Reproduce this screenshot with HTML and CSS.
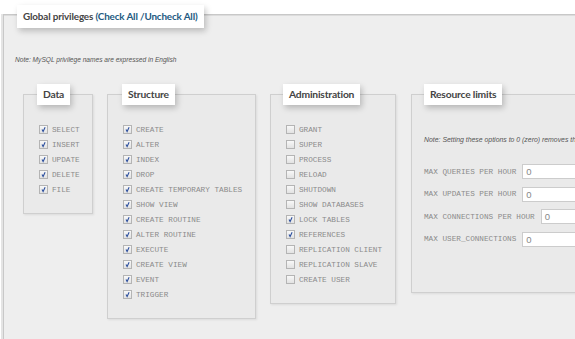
FILE: index.html
```html
<!DOCTYPE html>
<html lang="en">
<head>
    <meta charset="UTF-8">
    <title>Global privileges</title>
    <link rel="stylesheet" href="styles.css">
</head>
<body>
    <div class="outer">
        <div class="legend">Global privileges <a href="#">(Check All /Uncheck All)</a></div>
        <p class="note">Note: MySQL privilege names are expressed in English</p>

        <div class="groups">
            <div class="group group-data">
                <div class="legend">Data</div>
                <ul class="privs">
                    <li><span class="cb on"><svg viewBox="0 0 9 9"><path d="M2.6 4.6 L4 7.2 L6.6 1.6"/></svg></span>SELECT</li>
                    <li><span class="cb on"><svg viewBox="0 0 9 9"><path d="M2.6 4.6 L4 7.2 L6.6 1.6"/></svg></span>INSERT</li>
                    <li><span class="cb on"><svg viewBox="0 0 9 9"><path d="M2.6 4.6 L4 7.2 L6.6 1.6"/></svg></span>UPDATE</li>
                    <li><span class="cb on"><svg viewBox="0 0 9 9"><path d="M2.6 4.6 L4 7.2 L6.6 1.6"/></svg></span>DELETE</li>
                    <li><span class="cb on"><svg viewBox="0 0 9 9"><path d="M2.6 4.6 L4 7.2 L6.6 1.6"/></svg></span>FILE</li>
                </ul>
            </div>

            <div class="group group-structure">
                <div class="legend">Structure</div>
                <ul class="privs">
                    <li><span class="cb on"><svg viewBox="0 0 9 9"><path d="M2.6 4.6 L4 7.2 L6.6 1.6"/></svg></span>CREATE</li>
                    <li><span class="cb on"><svg viewBox="0 0 9 9"><path d="M2.6 4.6 L4 7.2 L6.6 1.6"/></svg></span>ALTER</li>
                    <li><span class="cb on"><svg viewBox="0 0 9 9"><path d="M2.6 4.6 L4 7.2 L6.6 1.6"/></svg></span>INDEX</li>
                    <li><span class="cb on"><svg viewBox="0 0 9 9"><path d="M2.6 4.6 L4 7.2 L6.6 1.6"/></svg></span>DROP</li>
                    <li><span class="cb on"><svg viewBox="0 0 9 9"><path d="M2.6 4.6 L4 7.2 L6.6 1.6"/></svg></span>CREATE TEMPORARY TABLES</li>
                    <li><span class="cb on"><svg viewBox="0 0 9 9"><path d="M2.6 4.6 L4 7.2 L6.6 1.6"/></svg></span>SHOW VIEW</li>
                    <li><span class="cb on"><svg viewBox="0 0 9 9"><path d="M2.6 4.6 L4 7.2 L6.6 1.6"/></svg></span>CREATE ROUTINE</li>
                    <li><span class="cb on"><svg viewBox="0 0 9 9"><path d="M2.6 4.6 L4 7.2 L6.6 1.6"/></svg></span>ALTER ROUTINE</li>
                    <li><span class="cb on"><svg viewBox="0 0 9 9"><path d="M2.6 4.6 L4 7.2 L6.6 1.6"/></svg></span>EXECUTE</li>
                    <li><span class="cb on"><svg viewBox="0 0 9 9"><path d="M2.6 4.6 L4 7.2 L6.6 1.6"/></svg></span>CREATE VIEW</li>
                    <li><span class="cb on"><svg viewBox="0 0 9 9"><path d="M2.6 4.6 L4 7.2 L6.6 1.6"/></svg></span>EVENT</li>
                    <li><span class="cb on"><svg viewBox="0 0 9 9"><path d="M2.6 4.6 L4 7.2 L6.6 1.6"/></svg></span>TRIGGER</li>
                </ul>
            </div>

            <div class="group group-admin">
                <div class="legend">Administration</div>
                <ul class="privs">
                    <li><span class="cb"></span>GRANT</li>
                    <li><span class="cb"></span>SUPER</li>
                    <li><span class="cb"></span>PROCESS</li>
                    <li><span class="cb"></span>RELOAD</li>
                    <li><span class="cb"></span>SHUTDOWN</li>
                    <li><span class="cb"></span>SHOW DATABASES</li>
                    <li><span class="cb on"><svg viewBox="0 0 9 9"><path d="M2.6 4.6 L4 7.2 L6.6 1.6"/></svg></span>LOCK TABLES</li>
                    <li><span class="cb on"><svg viewBox="0 0 9 9"><path d="M2.6 4.6 L4 7.2 L6.6 1.6"/></svg></span>REFERENCES</li>
                    <li><span class="cb"></span>REPLICATION CLIENT</li>
                    <li><span class="cb"></span>REPLICATION SLAVE</li>
                    <li><span class="cb"></span>CREATE USER</li>
                </ul>
            </div>

            <div class="group group-limits">
                <div class="legend">Resource limits</div>
                <p class="note">Note: Setting these options to 0 (zero) removes the limit.</p>
                <div class="limits">
                    <label>MAX QUERIES PER HOUR <span class="field">0</span></label>
                    <label>MAX UPDATES PER HOUR <span class="field">0</span></label>
                    <label>MAX CONNECTIONS PER HOUR <span class="field">0</span></label>
                    <label>MAX USER_CONNECTIONS <span class="field">0</span></label>
                </div>
            </div>
        </div>
    </div>
</body>
</html>
```

FILE: styles.css
```css
body {
    margin: 0;
    background: #fff;
    font-family: Lato, "Liberation Sans", sans-serif;
    overflow: hidden;
}
.outer {
    margin: 14px 0 0 3px;
    border-top: 1px solid #c8c8c8;
    border-left: 1px solid #c8c8c8;
    box-shadow: -2px 0 0 #e4e4e4, inset 0 1px 0 #dcdcdc;
    background: #eee;
    height: 330px;
    width: 800px;
}
.legend {
    display: block;
    width: fit-content;
    background: #fff;
    color: #444;
    font-weight: bold;
    box-shadow: 2px 3px 6px rgba(0, 0, 0, 0.22);
    white-space: nowrap;
}
.outer > .legend {
    margin: -10px 0 0 13px;
    height: 23px;
    line-height: 23px;
    padding: 0 6px;
    font-size: 9.9px;
    letter-spacing: -0.15px;
}
.legend a {
    color: #235a81;
    text-decoration: none;
}
.note {
    font-family: "Liberation Sans", Arial, sans-serif;
    font-style: italic;
    font-size: 6.6px;
    color: #555;
    margin: 0;
    line-height: 10px;
    white-space: nowrap;
}
.outer > .note {
    margin: 27px 0 0 11px;
}
.groups {
    display: flex;
    align-items: flex-start;
    gap: 14px;
    margin: 29px 0 0 19px;
}
.group {
    flex-shrink: 0;
    background: #eaeaea;
    border: 1px solid #cfcfcf;
    box-shadow: 1px 1px 2px rgba(0, 0, 0, 0.08);
}
.group > .legend {
    margin-top: -11px;
    height: 21px;
    line-height: 21px;
    padding: 0 6px;
    font-size: 10.3px;
    letter-spacing: -0.2px;
}
.group-data { width: 68px; }
.group-data > .legend { margin-left: 13px; }
.group-structure { width: 147px; }
.group-structure > .legend { margin-left: 14px; }
.group-admin { width: 124px; }
.group-admin > .legend { margin-left: 12px; }
.group-limits { width: 300px; margin-left: 1px; }
.group-limits > .legend { margin-left: 12px; }
.privs {
    list-style: none;
    margin: 0;
    padding: 17px 0 16px 15px;
}
.privs li {
    display: flex;
    align-items: center;
    height: 15px;
    font-family: "Liberation Mono", "Courier New", monospace;
    font-size: 7.7px;
    color: #8a8a8a;
    white-space: nowrap;
}
.cb {
    width: 9px;
    height: 9px;
    box-sizing: border-box;
    border: 1px solid #b4b4b4;
    background: linear-gradient(#f8f8f8, #e2e2e2);
    margin-right: 4px;
    flex-shrink: 0;
}
.cb svg {
    display: block;
    width: 7px;
    height: 7px;
}
.cb path {
    fill: none;
    stroke: #2c4f9e;
    stroke-width: 1.4;
}
.group-limits .note {
    margin: 30px 0 0 12px;
    font-size: 6.9px;
}
.limits {
    display: flex;
    flex-direction: column;
    gap: 7.5px;
    padding: 19px 0 45px 12px;
}
.limits label {
    display: flex;
    align-items: center;
    height: 15px;
    font-family: "Liberation Mono", "Courier New", monospace;
    font-size: 7.7px;
    color: #8a8a8a;
    white-space: nowrap;
}
.field {
    margin-left: 6px;
    width: 120px;
    height: 15px;
    box-sizing: border-box;
    background: #fff;
    border: 1px solid #ccc;
    font-family: "Liberation Sans", Arial, sans-serif;
    font-size: 9.5px;
    color: #888;
    line-height: 13px;
    padding-left: 3px;
}
```
